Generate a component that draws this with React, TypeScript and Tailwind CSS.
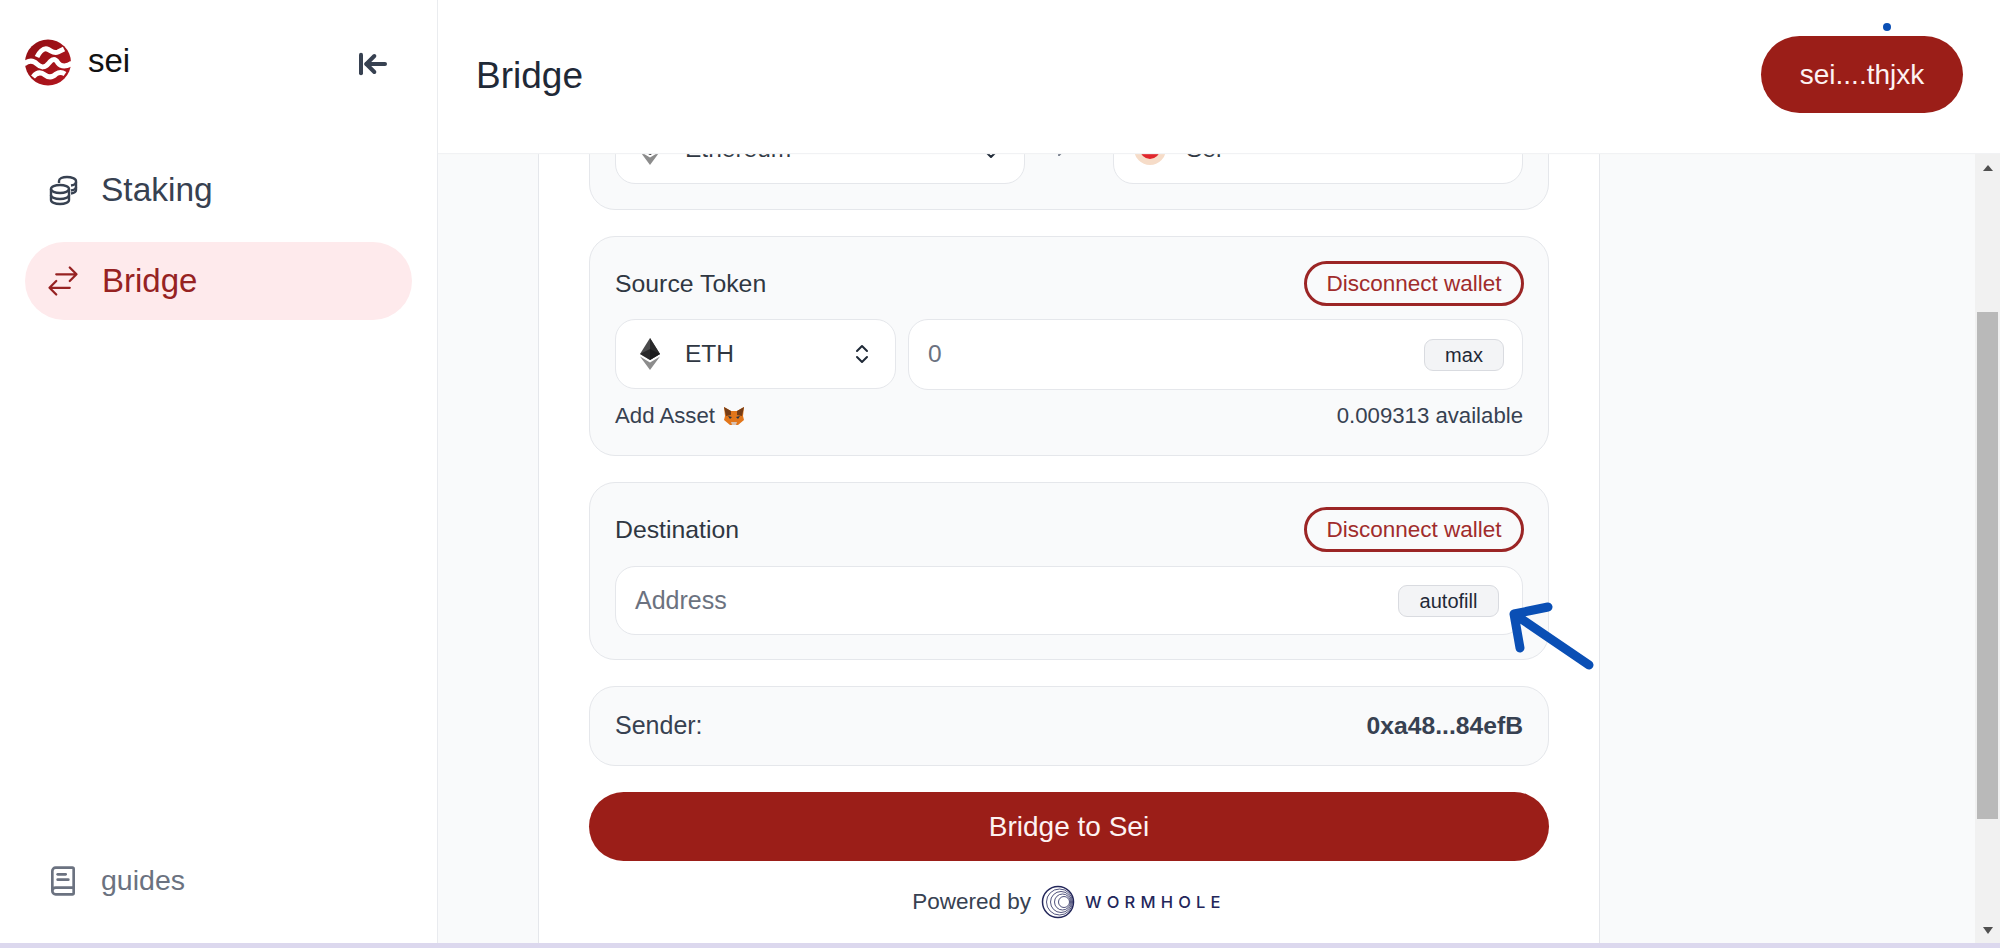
import { ArrowLeftToLine, BookText, ChevronsUpDown, MoveRight } from "lucide-react";
import { HiOutlineArrowsRightLeft } from "react-icons/hi2";

const SeiLogo = () => (
  <svg viewBox="0 0 46 47" className="h-[47px] w-[46px] shrink-0">
    <defs>
      <linearGradient id="seiGrad" x1="0" y1="0" x2="1" y2="1">
        <stop offset="0" stopColor="#8f0f14" />
        <stop offset="1" stopColor="#b5161f" />
      </linearGradient>
    </defs>
    <circle cx="23" cy="23.5" r="23" fill="url(#seiGrad)" />
    <path d="M12 18 C14 14 18 9 22 10 C26 11 28 15 33 13 C35 12 37 11 39 10" fill="none" stroke="#fff" strokeWidth="5" />
    <path d="M-1 25 C4 21 8 21 12 25 C16 29 20 29 24 24 C27 20 30 19 33 24 C36 28 42 28 47 24" fill="none" stroke="#fff" strokeWidth="5" />
    <path d="M8 38 C12 33 16 33 20 36 C24 39 28 38 31 35 C34 33 37 33 40 35" fill="none" stroke="#fff" strokeWidth="5" />
  </svg>
);

const StakingIcon = () => (
  <svg viewBox="0 0 30 32" fill="none" stroke="#374151" strokeWidth="2.4" className="h-[32px] w-[30px] shrink-0">
    <ellipse cx="11" cy="15" rx="9" ry="4" />
    <path d="M2 15v11c0 2.4 4 4 9 4s9-1.600 9-4V15" />
    <path d="M2 21c0 2.400 4 4 9 4s9-1.600 9-4" />
    <path d="M10 9V7c0-2.400 3.500-4 8-4s9 1.600 9 4v9c0 1.500-2 3-5 3.500" />
    <path d="M27 8c0 1.500-2 3-5 3.500M27 13c0 1.500-2 3-5 3.500" />
  </svg>
);

const EthIcon = () => (
  <svg viewBox="0 0 20 32" className="h-[32px] w-[20px] shrink-0">
    <path d="M10 0 L0 16 L10 22 L20 16 Z" fill="#4a4a4b" />
    <path d="M10 0 L10 22 L20 16 Z" fill="#2a2a2b" />
    <path d="M10 11 L0 16 L10 22 L20 16 Z" fill="#141414" opacity="0.6" />
    <path d="M0 18.500 L10 32 L20 18.500 L10 24.500 Z" fill="#8c8c8c" />
  </svg>
);

const FoxIcon = () => (
  <svg viewBox="0 0 22 20" className="inline-block h-[20px] w-[22px] align-[-2px]">
    <path d="M1 1 L8 5 H14 L21 1 L20 10 L21 14 L15 19 H7 L1 14 L2 10 Z" fill="#e2761b" />
    <path d="M1 1 L8 5 L8 9 L3 10 Z M21 1 L14 5 L14 9 L19 10 Z" fill="#763d16" />
    <path d="M5 10 L9 11 L7 13 Z M17 10 L13 11 L15 13 Z" fill="#233447" />
    <path d="M8 16 L14 16 L13 19 H9 Z" fill="#d7c1b3" />
  </svg>
);

const WormholeLogo = () => (
  <svg viewBox="0 0 34 34" fill="none" stroke="#23265a" className="h-[34px] w-[34px] shrink-0">
    <circle cx="17" cy="17" r="15.500" strokeWidth="1.500" />
    <circle cx="18.500" cy="17" r="13" strokeWidth="0.800" />
    <circle cx="20" cy="17" r="10.500" strokeWidth="0.800" />
    <circle cx="21.500" cy="17" r="8" strokeWidth="0.800" />
    <circle cx="23" cy="17" r="5.500" strokeWidth="0.800" />
  </svg>
);

const Card = ({ className, children }: { className?: string; children: React.ReactNode }) => (
  <div className={`rounded-[26px] border border-[#e5e7eb] bg-[#f9fafb] ${className}`}>{children}</div>
);

const DisconnectButton = () => (
  <button className="-mr-[1px] flex h-[45px] w-[220px] items-center justify-center rounded-full border-[3px] border-[#9b2525] text-[22.500px] text-[#a02c2c]">
    Disconnect wallet
  </button>
);

const App = () => {
  return (
    <div className="relative flex h-[948px] w-[2000px] flex-col overflow-hidden bg-white font-[family-name:'Liberation_Sans',Arial,sans-serif]">
      <div className="flex min-h-0 flex-1">
        {/* sidebar */}
        <aside className="flex w-[438px] shrink-0 flex-col border-r border-[#e9ebef] bg-white px-[25px]">
          <div className="flex h-[153px] items-start justify-between pt-[39px] pr-[22px]">
            <div className="flex items-center gap-[17px]">
              <SeiLogo />
              <span className="-mt-[4px] text-[33px] leading-[40px] text-[#111]">sei</span>
            </div>
            <ArrowLeftToLine className="mt-[9px] h-[32px] w-[34px] text-[#374151]" strokeWidth={3} />
          </div>
          <nav className="flex flex-col gap-[13px]">
            <div className="-mt-[2px] flex h-[78px] items-center gap-[22px] pl-[24px] text-[33.500px] text-[#374151]">
              <StakingIcon />
              <span>Staking</span>
            </div>
            <div className="flex h-[78px] w-[387px] items-center gap-[21px] rounded-full bg-[#feeaec] pl-[20px] text-[33px] text-[#962222]">
              <HiOutlineArrowsRightLeft className="h-[36px] w-[36px] shrink-0" />
              <span>Bridge</span>
            </div>
          </nav>
          <div className="mt-auto mb-[41px] flex items-center gap-[22px] pl-[22px] text-[28.500px] text-[#6b7280]">
            <BookText className="h-[32px] w-[32px]" strokeWidth={2} />
            <span>guides</span>
          </div>
        </aside>

        <div className="flex min-w-0 flex-1 flex-col">
          {/* top bar */}
          <header className="z-10 flex h-[153px] shrink-0 items-start justify-between bg-white pt-[36px] pr-[37px] pl-[38px] shadow-[0_1px_1px_#f1f2f4]">
            <h1 className="mt-[18px] text-[37px] leading-[44px] text-[#1f2937]">Bridge</h1>
            <button className="flex h-[77px] w-[202px] items-center justify-center rounded-full bg-[#9b1e18] text-[28px] text-[#fdf2f2]">
              sei....thjxk
            </button>
          </header>

          <div className="flex min-h-0 flex-1">
            <main className="min-w-0 flex-1 overflow-hidden bg-[#f9fafb] pl-[100px]">
              <div className="-mt-[66px] flex h-[900px] w-[1062px] flex-col gap-[26px] border-x border-[#e5e7eb] bg-white px-[50px] pt-0">
                {/* network selects */}
                <Card className="flex items-center justify-between p-[25px] pt-[26px]">
                  <div className="flex h-[70px] w-[410px] items-center rounded-[20px] border border-[#e5e7eb] bg-white pr-[21px] pl-[24px]">
                    <EthIcon />
                    <span className="ml-[25px] flex-1 text-[24.500px] text-[#2f3742]">Ethereum</span>
                    <ChevronsUpDown className="h-[24px] w-[24px] text-[#1f2937]" />
                  </div>
                  <MoveRight className="mt-[4px] mr-[32px] h-[28px] w-[24px] text-[#6b7280]" />
                  <div className="flex h-[70px] w-[410px] items-center rounded-[20px] border border-[#e5e7eb] bg-white pl-[20px]">
                    <div className="h-[32px] w-[32px] rounded-full border-[6px] border-[#f6dcc8] bg-[#e0262c]" />
                    <span className="ml-[20px] text-[24.500px] text-[#2f3742]">Sei</span>
                  </div>
                </Card>

                {/* source token */}
                <Card className="px-[25px] pt-[24px] pb-[26px]">
                  <div className="flex items-center justify-between">
                    <span className="text-[24.800px] text-[#2f3742]">Source Token</span>
                    <DisconnectButton />
                  </div>
                  <div className="mt-[13px] flex gap-[12px]">
                    <div className="flex h-[70px] w-[281px] items-center rounded-[20px] border border-[#e5e7eb] bg-white pr-[21px] pl-[24px]">
                      <EthIcon />
                      <span className="ml-[25px] flex-1 text-[24.500px] text-[#2f3742]">ETH</span>
                      <ChevronsUpDown className="h-[24px] w-[24px] text-[#1f2937]" />
                    </div>
                    <div className="flex h-[71px] flex-1 items-center justify-between rounded-[20px] border border-[#e5e7eb] bg-white pr-[18px] pl-[19px]">
                      <span className="text-[24.500px] text-[#6b7280]">0</span>
                      <button className="flex h-[32px] w-[80px] items-center justify-center rounded-[9px] border border-[#d9dbe0] bg-[#f3f4f6] text-[20px] text-[#1f2937]">
                        max
                      </button>
                    </div>
                  </div>
                  <div className="mt-[13px] flex items-center justify-between text-[22.200px] leading-[26px] text-[#374151]">
                    <span className="flex items-center gap-[8px]">
                      Add Asset <FoxIcon />
                    </span>
                    <span>0.009313 available</span>
                  </div>
                </Card>

                {/* destination */}
                <Card className="px-[25px] pt-[24px] pb-[24px]">
                  <div className="flex items-center justify-between">
                    <span className="text-[24.800px] text-[#2f3742]">Destination</span>
                    <DisconnectButton />
                  </div>
                  <div className="mt-[14px] flex h-[69px] items-center justify-between rounded-[20px] border border-[#e5e7eb] bg-white pr-[23px] pl-[19px]">
                    <span className="text-[25px] text-[#6b7280]">Address</span>
                    <button className="flex h-[32px] w-[101px] items-center justify-center rounded-[9px] border border-[#d9dbe0] bg-[#f3f4f6] text-[20px] text-[#1f2937]">
                      autofill
                    </button>
                  </div>
                </Card>

                <Card className="flex h-[80px] items-center justify-between px-[25px] text-[#374151]">
                  <span className="text-[25px]">Sender:</span>
                  <span className="text-[24.700px] font-bold">0xa48...84efB</span>
                </Card>

                <button className="flex h-[69px] shrink-0 items-center justify-center rounded-full bg-[#9b1e18] text-[28px] text-[#fdf2f2]">
                  Bridge to Sei
                </button>

                <div className="-mt-[2px] flex items-center justify-center gap-[10px]">
                  <span className="text-[22.500px] text-[#374151]">Powered by</span>
                  <WormholeLogo />
                  <span className="font-[family-name:Inter,sans-serif] text-[16.500px] font-medium tracking-[5.200px] text-[#23265a]">
                    WORMHOLE
                  </span>
                </div>
              </div>
            </main>

            {/* scrollbar */}
            <div className="flex w-[25px] shrink-0 flex-col items-center bg-[#f1f1f1]">
              <div className="mt-[12px] h-0 w-0 border-x-[5.500px] border-b-[6px] border-x-transparent border-b-[#505050]" />
              <div className="mt-[141px] h-[507px] w-[21px] bg-[#b9b9b9]" />
              <div className="mt-auto mb-[9px] h-0 w-0 border-x-[5.500px] border-t-[7px] border-x-transparent border-t-[#505050]" />
            </div>
          </div>
        </div>
      </div>
      <div className="h-[5px] shrink-0 bg-[#dcd8ee]" />

      {/* hand-drawn annotation on top of the screenshot */}
      <div className="absolute top-[23px] left-[1883px] z-20 h-[8px] w-[8px] rounded-full bg-[#0a4fb5]" />
      <svg className="absolute top-[600px] left-[1505px] z-20 h-[72px] w-[90px]" viewBox="1505 600 90 72" fill="none" stroke="#0a4fb5" strokeWidth="9" strokeLinecap="round" strokeLinejoin="round">
        <path d="M1548 607 L1514 614 L1520 648 M1514 614 L1589 665" />
      </svg>
    </div>
  );
};

export default App;
